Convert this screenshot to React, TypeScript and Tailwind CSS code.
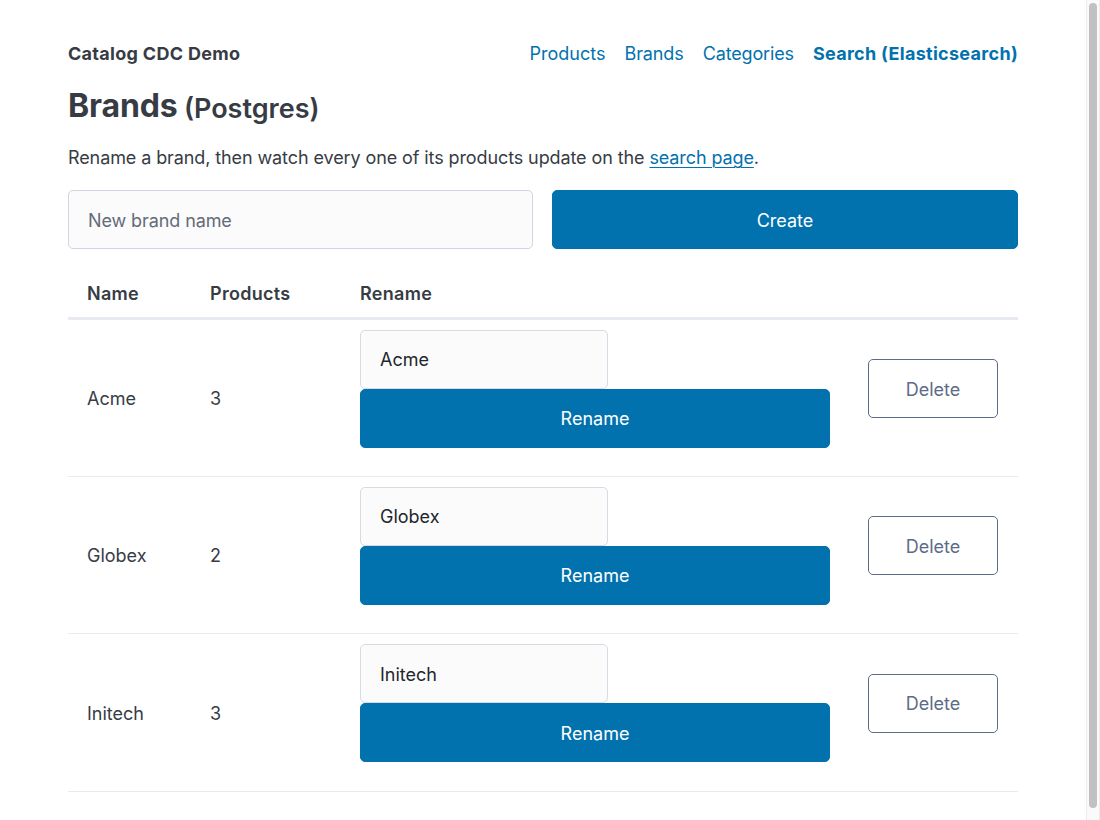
export default function App() {
  const rows = [
    ["Acme", "3", "h-[158px]"],
    ["Globex", "2", "h-[157.5px]"],
    ["Initech", "3", "h-[157.5px]"],
  ];
  return (
    <div className="relative h-[820px] w-[1100px] overflow-hidden bg-white font-['Inter',sans-serif] text-[18px] leading-[27px] text-[#373c44]">
      <div className="ml-[68px] w-[950px]">
        <nav className="mt-[40px] flex h-[27px] items-center justify-between">
          <strong className="font-bold tracking-[0.3px]">Catalog CDC Demo</strong>
          <ul className="flex gap-[19px] text-[#0172ad]">
            <li><a>Products</a></li>
            <li><a className="tracking-[-0.1px]">Brands</a></li>
            <li><a className="tracking-[-0.15px]">Categories</a></li>
            <li><a className="font-bold tracking-[0.3px]">Search (Elasticsearch)</a></li>
          </ul>
        </nav>
        <h1 className="mt-[16px] text-[32px] leading-[45px] font-bold tracking-[-0.15px]">
          Brands <small className="relative top-[1px] -ml-[1px] text-[27px] font-semibold tracking-normal">(Postgres)</small>
        </h1>
        <p className="mt-[14px] tracking-[-0.1px]">
          Rename a brand, then watch every one of its products update on the{" "}
          <a className="text-[#0172ad] underline decoration-1 underline-offset-[3px]">search page</a>.
        </p>
        <form className="mt-[19px] grid grid-cols-[465px_466px] gap-[19px]">
          <input
            placeholder="New brand name"
            className="h-[59px] rounded-[5px] border border-[#cfd5e2] bg-[#fbfbfc] px-[19px] pt-[1px] tracking-[-0.1px] placeholder:text-[#646b79]"
          />
          <button type="button" className="h-[59px] rounded-[5px] border border-[#0172ad] bg-[#0172ad] pt-[2px] text-white">
            Create
          </button>
        </form>
        <table className="mt-[18px] w-[950px] table-fixed border-collapse text-left">
          <colgroup>
            <col className="w-[123px]" />
            <col className="w-[150px]" />
            <col className="w-[508px]" />
            <col className="w-[169px]" />
          </colgroup>
          <thead>
            <tr className="h-[51px] border-b-[3px] border-[#e7eaf0]">
              <th className="px-[19px] pt-[4px] font-semibold tracking-[0.3px]">Name</th>
              <th className="px-[19px] pt-[4px] font-semibold tracking-[0.3px]">Products</th>
              <th className="px-[19px] pt-[4px] font-semibold tracking-[0.3px]">Rename</th>
              <th className="px-[19px]"></th>
            </tr>
          </thead>
          <tbody>
            {rows.map(([name, count, height]) => (
              <tr key={name} className={`${height} border-b border-[#e7eaf0]`}>
                <td className="px-[19px] pt-[2px] align-middle">{name}</td>
                <td className="px-[19px] pt-[2px] align-middle">{count}</td>
                <td className="px-[19px] align-middle">
                  <div className="mb-[18px] flex flex-col items-start">
                    <input
                      defaultValue={name}
                      className="h-[59px] w-[248px] rounded-[5px] border border-[#d5dae5] bg-[#fbfbfc] px-[19px] pt-[1px] text-[#23262c]"
                    />
                    <button type="button" className="h-[59px] w-[470px] rounded-[5px] border border-[#0172ad] bg-[#0172ad] pt-[1px] text-white">
                      Rename
                    </button>
                  </div>
                </td>
                <td className="px-[19px] align-middle">
                  <button type="button" className="mb-[18px] h-[59px] w-[130px] rounded-[5px] border border-[#5d6b89] bg-white pt-[1px] text-[#5d6b89]">
                    Delete
                  </button>
                </td>
              </tr>
            ))}
          </tbody>
        </table>
      </div>
      <div className="absolute top-0 right-0 bottom-0 w-[14px] border-x border-[#ececec] bg-[#fafafa]">
        <div className="mx-auto mt-[3px] h-[805px] w-[8px] rounded-full bg-[#c1c1c1]" />
      </div>
    </div>
  );
}
